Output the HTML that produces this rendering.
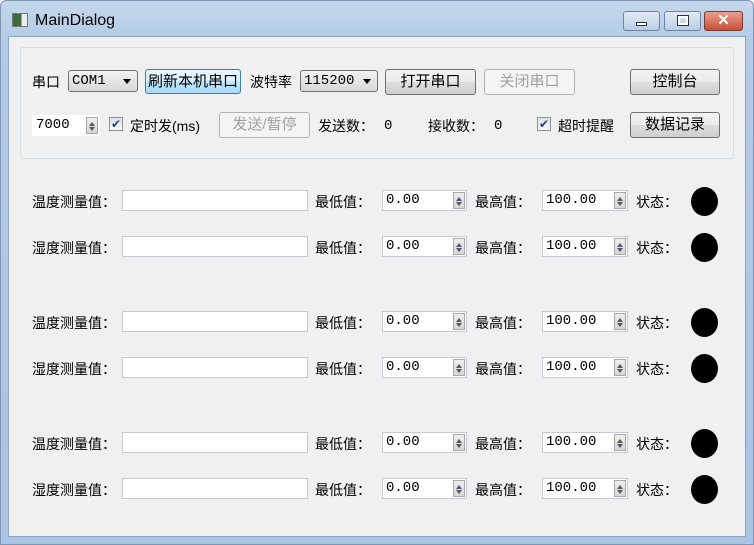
<!DOCTYPE html>
<html><head><meta charset="utf-8"><style>
*{box-sizing:border-box;margin:0;padding:0}
body{width:754px;height:545px;overflow:hidden;background:#fff;font-family:"Liberation Sans","Noto Sans CJK SC",sans-serif;font-size:14px;color:#000;position:relative}
.frame{position:absolute;left:0;top:0;width:754px;height:545px;background:linear-gradient(#c5d7ec,#b3cbe6 40px,#a9c3e2);border:1px solid #7e96b3;border-radius:6px 6px 0 0}
.client{position:absolute;left:8px;top:36px;width:738px;height:501px;background:#f0f0f0;border:1px solid #8ea5c0}
.a{position:absolute;white-space:nowrap}
.btn{position:absolute;border:1px solid #707070;border-radius:3px;background:linear-gradient(#f2f2f2,#ebebeb 50%,#dddddd 51%,#cfcfcf);text-align:center;font-size:15px}
.dis{border-color:#adb2b5;background:#f4f4f4;color:#a0a0a0}
.combo{position:absolute;border:1px solid #707070;border-radius:3px;background:linear-gradient(#f2f2f2,#e5e5e5 50%,#d8d8d8);font-family:"Liberation Mono",monospace;font-size:14px;padding-left:3px}
.combo:after{content:"";position:absolute;right:6px;top:8px;border:4px solid transparent;border-top:5px solid #000}
.edit{position:absolute;background:#fff;border:1px solid #c7cbd1;height:21px}
.spin{position:absolute;background:#fff;border:1px solid #c7cbd1;height:21px;font-family:"Liberation Mono",monospace;font-size:14px;padding-left:3px;line-height:19px}
.spin i{position:absolute;right:1px;top:1px;width:12px;height:17px;background:linear-gradient(#eee,#d6d6d6);border:1px solid #a8a8a8}
.spin i:before{content:"";position:absolute;left:2px;top:1px;border:3px solid transparent;border-bottom:4px solid #556}
.spin i:after{content:"";position:absolute;left:2px;top:9px;border:3px solid transparent;border-top:4px solid #556}
.cb{position:absolute;width:14px;height:14px;border:1px solid #8f8f8f;background:linear-gradient(#dfe4ea,#f5f7f9);font-size:12px;line-height:12px;text-align:center;color:#2a3c78}
.dot{position:absolute;width:27px;height:29px;border-radius:50%;background:#000}
.lbl{font-size:14px}
</style></head><body>
<div class="frame"></div>
<div class="a" style="left:12px;top:13px;width:16px;height:14px;background:linear-gradient(90deg,#3b6d3b 60%,#eee 60%);border:1px solid #777"></div>
<div class="a" style="left:35px;top:12px;font-size:16px">MainDialog</div>
<div class="a" style="left:623px;top:11px;width:37px;height:20px;border:1px solid #6d83a0;border-radius:3px;background:linear-gradient(#e1ebf6,#b9cde6)"><div style="position:absolute;left:12px;top:10px;width:11px;height:4px;background:#fff;border:1px solid #333"></div></div>
<div class="a" style="left:664px;top:11px;width:37px;height:20px;border:1px solid #6d83a0;border-radius:3px;background:linear-gradient(#e1ebf6,#b9cde6)"><div style="position:absolute;left:13px;top:4px;width:10px;height:9px;border:2px solid #fff;outline:1px solid #333"></div></div>
<div class="a" style="left:704px;top:11px;width:39px;height:20px;border:1px solid #7a3a30;border-radius:3px;background:linear-gradient(#e8a08f,#c8503a);color:#fff;font-weight:bold;text-align:center;font-size:15px;line-height:18px">✕</div>
<div class="client"></div>
<div class="a" style="left:20px;top:47px;width:714px;height:112px;border:1px solid #d5dfe5;border-radius:3px"></div>

<div class="a lbl" style="left:32px;top:72px">串口</div>
<div class="combo" style="left:68px;top:70px;width:70px;height:22px;line-height:20px">COM1</div>
<div class="btn" style="left:145px;top:69px;width:96px;height:25px;line-height:23px;border-color:#3c7fb1;background:linear-gradient(#eaf6fd,#d9f0fc 50%,#bee6fd 51%,#a7d9f5)">刷新本机串口</div>
<div class="a lbl" style="left:250px;top:72px">波特率</div>
<div class="combo" style="left:300px;top:70px;width:78px;height:22px;line-height:20px">115200</div>
<div class="btn" style="left:385px;top:69px;width:91px;height:26px;line-height:24px">打开串口</div>
<div class="btn dis" style="left:484px;top:69px;width:91px;height:26px;line-height:24px">关闭串口</div>
<div class="btn" style="left:630px;top:69px;width:90px;height:26px;line-height:24px">控制台</div>

<div class="spin" style="left:32px;top:115px;width:68px;border-color:#fff">7000<i></i></div>
<div class="cb" style="left:109px;top:117px">✔</div>
<div class="a lbl" style="left:130px;top:116px">定时发(ms)</div>
<div class="btn dis" style="left:219px;top:112px;width:91px;height:26px;line-height:24px">发送/暂停</div>
<div class="a lbl" style="left:318px;top:116px">发送数：</div>
<div class="a" style="left:384px;top:118px;font-family:'Liberation Mono',monospace;font-size:14px">0</div>
<div class="a lbl" style="left:428px;top:116px">接收数：</div>
<div class="a" style="left:494px;top:118px;font-family:'Liberation Mono',monospace;font-size:14px">0</div>
<div class="cb" style="left:537px;top:117px">✔</div>
<div class="a lbl" style="left:558px;top:116px">超时提醒</div>
<div class="btn" style="left:630px;top:112px;width:90px;height:26px;line-height:24px">数据记录</div>

<div id="rows"></div>
<script>
var ys=[201,247,322,368,443,489],n=['温度测量值：','湿度测量值：'],h='';
ys.forEach(function(y,i){var t=y-11;
h+='<div class="a lbl" style="left:32px;top:'+(y-9)+'px">'+n[i%2]+'</div>'+
'<div class="edit" style="left:122px;top:'+t+'px;width:186px"></div>'+
'<div class="a lbl" style="left:315px;top:'+(y-9)+'px">最低值：</div>'+
'<div class="spin" style="left:382px;top:'+t+'px;width:85px">0.00<i></i></div>'+
'<div class="a lbl" style="left:475px;top:'+(y-9)+'px">最高值：</div>'+
'<div class="spin" style="left:542px;top:'+t+'px;width:86px">100.00<i></i></div>'+
'<div class="a lbl" style="left:636px;top:'+(y-9)+'px">状态：</div>'+
'<div class="dot" style="left:691px;top:'+(y-14)+'px"></div>';});
document.getElementById('rows').innerHTML=h;
</script>
</body></html>
